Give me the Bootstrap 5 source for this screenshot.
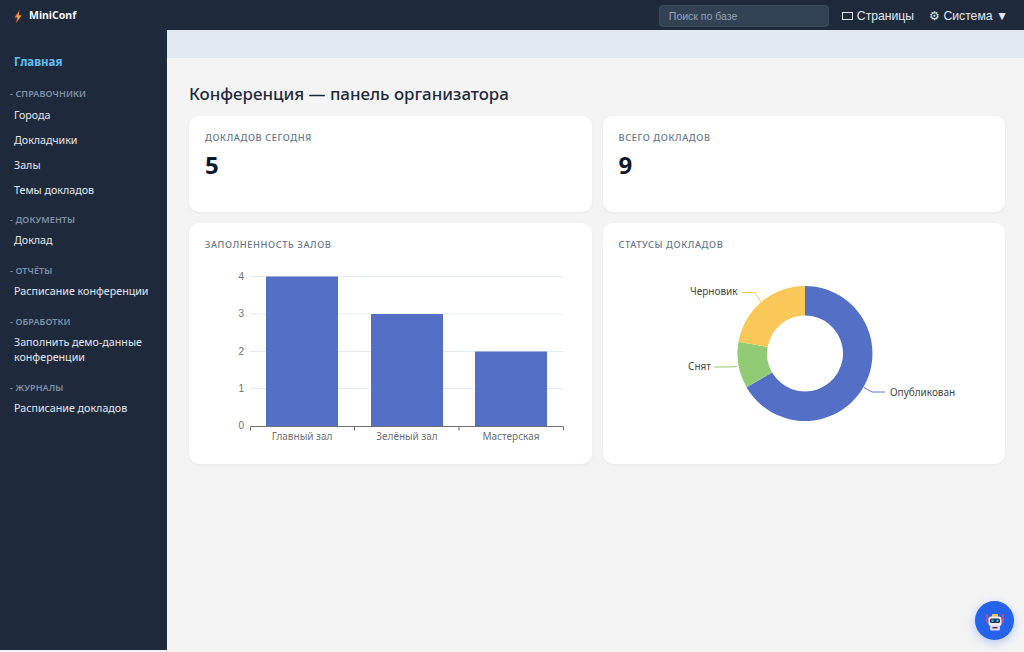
<!DOCTYPE html>
<html lang="ru">

<head>
  <meta charset="UTF-8">
  <meta name="viewport" content="width=device-width, initial-scale=1.0">
  <title>MiniConf</title>
  <link href="https://cdn.jsdelivr.net/npm/bootstrap@5.3.0/dist/css/bootstrap.min.css" rel="stylesheet">
  <style>
    html, body { height: 100%; overflow: hidden; }
    body { background-color: #f4f4f5; font-family: "Noto Sans", "Open Sans", sans-serif; }

    .top-bar { height: 30px; background-color: #1e293b; color: #fff; }
    .brand-name { font-size: 10.5px; font-weight: 700; color: #f8fafc; margin-left: 7px; }
    .brand-box { padding: 2px 0 0 14px; }
    .top-search {
      width: 170px; height: 22px; padding: 0 9px; font: 10.5px "Liberation Sans", sans-serif;
      color: #e2e8f0; background-color: #334155; border: 1px solid #3f4d63; border-radius: 4px;
    }
    .top-search::placeholder { color: #94a3b8; }
    .top-link { font: 12.2px "Liberation Sans", sans-serif; color: #e2e8f0; }
    .top-tools { padding: 1px 16px 0 0; }
    .top-pages { margin: 0 15px 0 13px; }

    .page-body { height: calc(100% - 30px); }
    .side-bar { width: 167px; height: calc(100% - 2px); flex: none; background-color: #1e293b; padding: 23px 14px 0; font-size: 10.7px; }
    .side-home { display: block; font-weight: 700; font-size: 11.5px; color: #60c0f5; text-decoration: none; margin-bottom: 16px; line-height: 18px; }
    .side-group { font-size: 9px; font-weight: 600; letter-spacing: .1px; color: #8091a8; line-height: 14px; margin: 0 0 1px -4px; text-transform: uppercase; }
    .side-link { display: block; color: #e2e8f0; text-decoration: none; line-height: 14.5px; padding: 5.25px 0; }
    .side-section { margin-bottom: 11px; }
    .side-first { margin-bottom: 10px; }
    .side-first .side-group { margin-bottom: 2px; }

    .strip-top { height: 28px; background-color: #e2e8f0; }
    .page-main { padding: 24px 19px 0 22px; }
    .page-title { font-size: 16.9px; font-weight: 500; color: #1e293b; line-height: 24px; margin-bottom: 10px; }
    .tile-grid { display: grid; grid-template-columns: minmax(0, 1fr) minmax(0, 1fr); gap: 11px; }
    .tile {
      background-color: #fff; border: 0; border-radius: 10px; padding: 15px 16px 0;
      box-shadow: 0 1px 3px rgba(15, 23, 42, .05);
    }
    .tile-stat { height: 96px; }
    .tile-chart { height: 241px; }
    .tile-label { font-size: 9.2px; font-weight: 500; letter-spacing: .63px; color: #64748b; line-height: 14px; text-transform: uppercase; }
    .tile-value { font-size: 24px; font-weight: 700; color: #0f172a; line-height: 28px; margin-top: 6px; }
    .chart-svg { display: block; margin: 3px 0 0 -16px; }
    .chart-svg text { font-family: "Noto Sans", sans-serif; font-size: 10px; fill: #6e7079; }
    .chart-svg .axis-num { font-family: "Liberation Sans", sans-serif; font-size: 10px; }
    .chart-svg .pie-text { fill: #464646; }

    .robot-btn {
      position: fixed; right: 10px; bottom: 12px; width: 39px; height: 39px; padding: 0;
      border: 0; border-radius: 50%; background-color: #2563eb; box-shadow: 0 3px 10px rgba(37, 99, 235, .3);
    }
  </style>
</head>

<body>
  <!-- Top bar -->
  <header class="top-bar d-flex align-items-center justify-content-between">
    <div class="brand-box d-flex align-items-center">
      <svg width="8" height="13" viewBox="0 0 8 13">
        <path d="M5.500 0 .5 7.500h2.600L2.300 13 7.700 5.200H4.800z" fill="#f4743b"/>
        <path d="M4.800 3 2.600 6.800h1.800l-.5 3L6.200 6H4.300z" fill="#fbbf24"/>
      </svg>
      <span class="brand-name">MiniConf</span>
    </div>
    <div class="top-tools d-flex align-items-center">
      <input class="top-search" type="text" placeholder="Поиск по базе">
      <span class="top-link top-pages d-flex align-items-center gap-1">
        <svg width="11" height="8" viewBox="0 0 11 8"><rect x=".5" y=".5" width="10" height="7" fill="none" stroke="#e2e8f0"/></svg>
        Страницы
      </span>
      <span class="top-link">⚙ Система ▼</span>
    </div>
  </header>

  <div class="page-body d-flex align-items-start">
    <!-- Sidebar -->
    <nav class="side-bar">
      <a class="side-home" href="#">Главная</a>
      <div class="side-section side-first">
        <div class="side-group">- Справочники</div>
        <a class="side-link" href="#">Города</a>
        <a class="side-link" href="#">Докладчики</a>
        <a class="side-link" href="#">Залы</a>
        <a class="side-link" href="#">Темы докладов</a>
      </div>
      <div class="side-section">
        <div class="side-group">- Документы</div>
        <a class="side-link" href="#">Доклад</a>
      </div>
      <div class="side-section">
        <div class="side-group">- Отчёты</div>
        <a class="side-link" href="#">Расписание конференции</a>
      </div>
      <div class="side-section">
        <div class="side-group">- Обработки</div>
        <a class="side-link" href="#">Заполнить демо-данные конференции</a>
      </div>
      <div class="side-section">
        <div class="side-group">- Журналы</div>
        <a class="side-link" href="#">Расписание докладов</a>
      </div>
    </nav>

    <div class="flex-grow-1">
      <div class="strip-top"></div>
      <main class="page-main">
        <h1 class="page-title">Конференция — панель организатора</h1>
        <div class="tile-grid">
          <div class="tile tile-stat">
            <div class="tile-label">Докладов сегодня</div>
            <div class="tile-value">5</div>
          </div>
          <div class="tile tile-stat">
            <div class="tile-label">Всего докладов</div>
            <div class="tile-value">9</div>
          </div>
          <div class="tile tile-chart">
            <div class="tile-label">Заполненность залов</div>
            <svg class="chart-svg" width="403" height="190" viewBox="189 255 403 190">
              <g stroke="#e6ebf3">
                <line x1="250" x2="563" y1="276.5" y2="276.5"/>
                <line x1="250" x2="563" y1="314" y2="314"/>
                <line x1="250" x2="563" y1="351.5" y2="351.5"/>
                <line x1="250" x2="563" y1="388.5" y2="388.5"/>
              </g>
              <g fill="#5470c6">
                <rect x="266" y="276.5" width="72" height="149.5"/>
                <rect x="371" y="314" width="72" height="112"/>
                <rect x="475" y="351.5" width="72" height="74.5"/>
              </g>
              <path d="M250.500 426.500H563.500M250.500 426.500v4M354.500 426.500v4M459 426.500v4M563.500 426.500v4" stroke="#6e7079" fill="none"/>
              <g text-anchor="end">
                <text class="axis-num" x="244" y="280">4</text>
                <text class="axis-num" x="244" y="317">3</text>
                <text class="axis-num" x="244" y="355">2</text>
                <text class="axis-num" x="244" y="392">1</text>
                <text class="axis-num" x="244" y="429">0</text>
              </g>
              <g text-anchor="middle">
                <text x="302" y="440">Главный зал</text>
                <text x="407" y="440">Зелёный зал</text>
                <text x="511" y="440">Мастерская</text>
              </g>
            </svg>
          </div>
          <div class="tile tile-chart">
            <div class="tile-label">Статусы докладов</div>
            <svg class="chart-svg" width="402" height="190" viewBox="603 255 402 190">
              <path d="M805 286A67.500 67.500 0 1 1 746.500 387.250L772.100 372.500A38 38 0 1 0 805 315.500Z" fill="#5470c6"/>
              <path d="M746.500 387.250A67.500 67.500 0 0 1 738.500 341.800L767.600 346.900A38 38 0 0 0 772.100 372.500Z" fill="#91cc75"/>
              <path d="M738.500 341.800A67.500 67.500 0 0 1 805 286V315.500A38 38 0 0 0 767.600 346.900Z" fill="#fac858"/>
              <path d="M864 387.500l8 4.500h13" fill="none" stroke="#5470c6"/>
              <path d="M737 366.500q-7 .5-15 .5h-8" fill="none" stroke="#91cc75"/>
              <path d="M761 302l-6-9.500h-13" fill="none" stroke="#fac858"/>
              <text class="pie-text" x="890" y="396">Опубликован</text>
              <text class="pie-text" x="688" y="370">Снят</text>
              <text class="pie-text" x="690" y="295">Черновик</text>
            </svg>
          </div>
        </div>
      </main>
    </div>
  </div>

  <button class="robot-btn d-flex align-items-center justify-content-center" type="button" aria-label="Помощник">
    <svg width="26" height="26" viewBox="0 0 26 26">
      <rect x="10" y="6" width="6" height="3" rx="1" fill="#f3c552"/>
      <path d="M5 6v9M21 6v9" stroke="#e0467f" stroke-width="1.600"/>
      <rect x="6.500" y="8.500" width="13" height="9.500" rx="2.500" fill="#f4ece6"/>
      <rect x="8" y="10.500" width="10" height="4.500" rx="1.500" fill="#27324f"/>
      <circle cx="10.500" cy="12.700" r="1.200" fill="#38bdf8"/>
      <circle cx="15.500" cy="12.700" r="1.200" fill="#38bdf8"/>
      <rect x="8" y="17.500" width="10" height="5" rx="1.500" fill="#e3d3ea"/>
      <rect x="10.500" y="19" width="5" height="1.400" fill="#3a3a55"/>
    </svg>
  </button>
</body>

</html>
